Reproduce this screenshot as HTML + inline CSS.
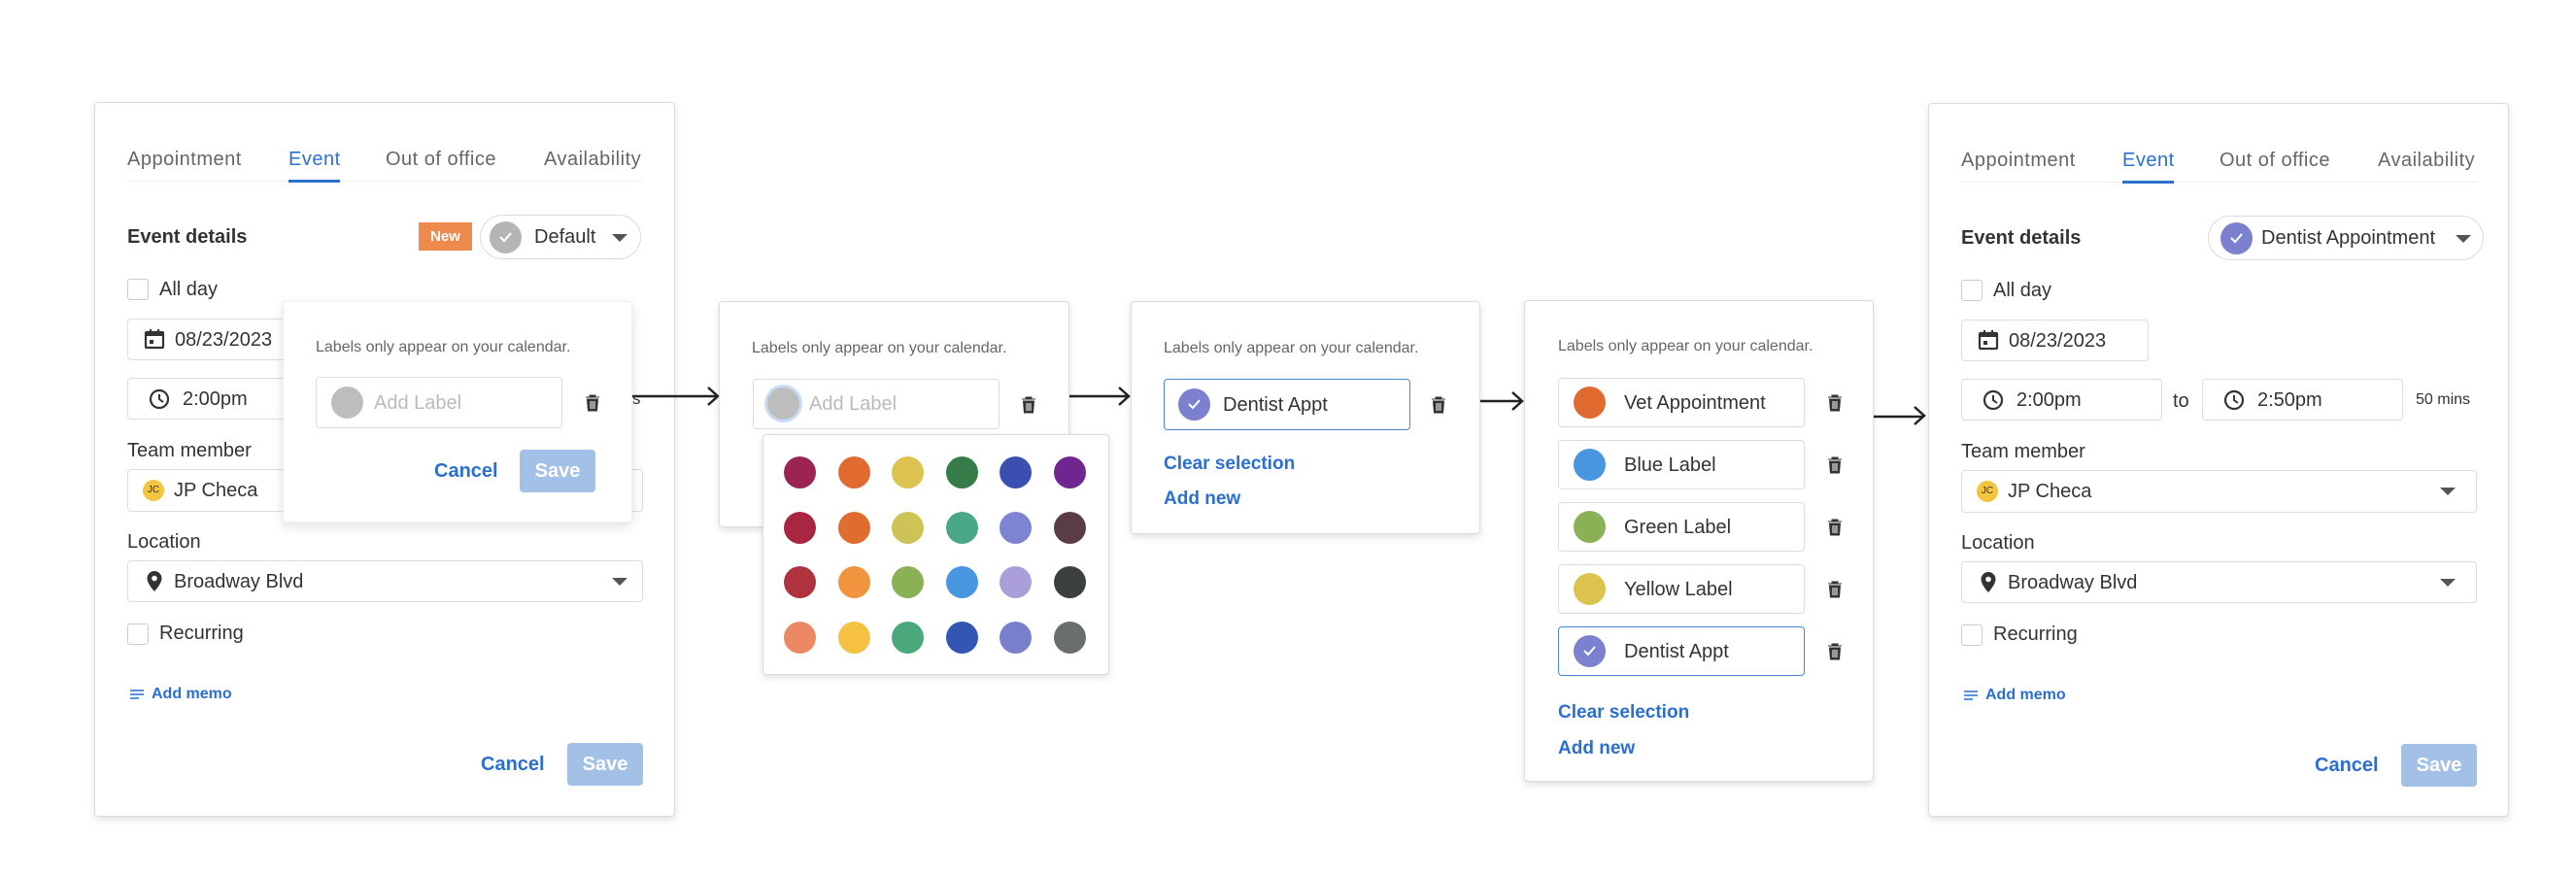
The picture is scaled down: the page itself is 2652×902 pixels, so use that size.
<!DOCTYPE html>
<html><head><meta charset="utf-8"><style>
*{box-sizing:border-box;margin:0;padding:0}
body{width:2652px;height:902px;background:#fff;position:relative;overflow:hidden;font-family:"Liberation Sans",Arial,sans-serif;color:#333}
.a{position:absolute}
.panel{position:absolute;background:#fff;border:1px solid #dcdcdc;border-radius:4px;box-shadow:0 3px 8px rgba(0,0,0,.12)}
.tab{position:absolute;top:46px;font-size:20px;color:#666;line-height:24px;white-space:nowrap;letter-spacing:0.5px}
.lbl{position:absolute;font-size:20px;line-height:24px;color:#333;white-space:nowrap}
.box{position:absolute;border:1.5px solid #dcdcdc;border-radius:4px;background:#fff}
.cb{position:absolute;width:22px;height:22px;border:1.5px solid #ccc;border-radius:3px}
.blue{color:#2b6fcf}
.save{position:absolute;background:#a3c1e6;color:#fff;font-weight:bold;font-size:20px;border-radius:4px;text-align:center}
.dot{position:absolute;width:33px;height:33px;border-radius:50%}
.hint{position:absolute;font-size:16px;color:#666;white-space:nowrap;line-height:20px}
.caret{position:absolute;width:0;height:0;border-left:8px solid transparent;border-right:8px solid transparent;border-top:8px solid #555}
svg{position:absolute}
</style></head><body>

<!-- PANEL 1 -->
<div class="panel" style="left:97px;top:105px;width:598px;height:736px">
  <div class="tab" style="left:33px">Appointment</div>
  <div class="tab blue" style="left:199px">Event</div>
  <div class="tab" style="left:299px">Out of office</div>
  <div class="tab" style="left:462px">Availability</div>
  <div class="a" style="left:33px;top:80px;width:531px;height:1px;background:#eee"></div>
  <div class="a" style="left:199px;top:79px;width:53px;height:3px;background:#2b6fcf"></div>
  <div class="lbl" style="left:33px;top:126px;font-weight:bold">Event details</div>
  <div class="a" style="left:333px;top:123px;width:55px;height:29px;background:#ef8a4f;color:#fff;font-size:15px;font-weight:bold;text-align:center;line-height:29px">New</div>
  <div class="box" style="left:396px;top:115px;width:166px;height:46px;border-radius:23px"></div>
  <div class="dot" style="left:406px;top:122px;background:#b5b5b5"></div>
  <svg style="left:414px;top:131px" width="17" height="14" viewBox="0 0 17 14"><path d="M3 7l4 4 7-8" stroke="#fff" stroke-width="2" fill="none"/></svg>
  <div class="lbl" style="left:452px;top:126px">Default</div>
  <div class="caret" style="left:532px;top:135px"></div>
  <div class="cb" style="left:33px;top:181px"></div>
  <div class="lbl" style="left:66px;top:180px">All day</div>
  <div class="box" style="left:33px;top:222px;width:193px;height:43px"></div>
  <svg style="left:50px;top:232px" width="22" height="22" viewBox="0 0 22 22"><rect x="2" y="4" width="18" height="16" rx="1" fill="none" stroke="#333" stroke-width="2.2"/><rect x="2" y="4" width="18" height="4" fill="#333"/><rect x="6" y="1" width="2" height="5" fill="#333"/><rect x="14" y="1" width="2" height="5" fill="#333"/><rect x="6" y="12" width="4" height="4" fill="#333"/></svg>
  <div class="lbl" style="left:82px;top:232px">08/23/2023</div>
  <div class="box" style="left:33px;top:283px;width:207px;height:43px"></div>
  <svg style="left:55px;top:294px" width="22" height="22" viewBox="0 0 22 22"><circle cx="11" cy="11" r="9" fill="none" stroke="#333" stroke-width="2.2"/><path d="M11 6v5l4 3" stroke="#333" stroke-width="2" fill="none"/></svg>
  <div class="lbl" style="left:90px;top:293px">2:00pm</div>
  <div class="hint" style="left:553px;top:295px;color:#333;font-size:17px">s</div>
  <div class="lbl" style="left:33px;top:346px">Team member</div>
  <div class="box" style="left:33px;top:377px;width:531px;height:44px"></div>
  <div class="a" style="left:49px;top:388px;width:22px;height:22px;border-radius:50%;background:#f4c53e;font-size:10px;text-align:center;line-height:22px;color:#333">JC</div>
  <div class="lbl" style="left:81px;top:387px">JP Checa</div>
  <div class="lbl" style="left:33px;top:440px">Location</div>
  <div class="box" style="left:33px;top:471px;width:531px;height:43px"></div>
  <svg style="left:52px;top:481px" width="18" height="24" viewBox="0 0 18 24"><path d="M9 1a7.5 7.5 0 0 0-7.5 7.5C1.5 14 9 22 9 22s7.5-8 7.5-13.5A7.5 7.5 0 0 0 9 1z" fill="#333"/><circle cx="9" cy="8.5" r="2.8" fill="#fff"/></svg>
  <div class="lbl" style="left:81px;top:481px">Broadway Blvd</div>
  <div class="caret" style="left:532px;top:489px"></div>
  <div class="cb" style="left:33px;top:536px"></div>
  <div class="lbl" style="left:66px;top:534px">Recurring</div>
  <svg style="left:36px;top:603px" width="14" height="12" viewBox="0 0 14 12"><path d="M0 2h14M0 6h14M0 10h9" stroke="#2b6fcf" stroke-width="1.6"/></svg>
  <div class="lbl blue" style="left:58px;top:599px;font-size:16px;font-weight:bold;line-height:20px">Add memo</div>
  <div class="lbl blue" style="left:397px;top:669px;font-weight:bold">Cancel</div>
  <div class="save" style="left:486px;top:659px;width:78px;height:44px;line-height:44px">Save</div>
</div>
<!-- popup over panel 1 -->
<div class="panel" style="left:291px;top:310px;width:360px;height:228px;border-color:#eee;box-shadow:0 4px 12px rgba(0,0,0,.12)">
  <div class="hint" style="left:33px;top:37px">Labels only appear on your calendar.</div>
  <div class="box" style="left:33px;top:77px;width:254px;height:53px"></div>
  <div class="dot" style="left:49px;top:87px;background:#bdbdbd"></div>
  <div class="lbl" style="left:93px;top:92px;color:#bbb">Add Label</div>
  <svg style="left:310px;top:95px" width="16" height="18" viewBox="0 0 16 18"><path d="M1 3h14M5 3V1h6v2M2.5 5h11l-1 12h-9z" fill="#333" stroke="#333" stroke-width="1"/><path d="M6 7v8M8 7v8M10 7v8" stroke="#fff" stroke-width="1"/></svg>
  <div class="lbl blue" style="left:155px;top:162px;font-weight:bold">Cancel</div>
  <div class="save" style="left:243px;top:152px;width:78px;height:44px;line-height:44px">Save</div>
</div>

<!-- arrows -->
<svg style="left:651px;top:396px" width="92" height="24" viewBox="0 0 92 24"><path d="M0 12h88M78 3l10 9-10 9" stroke="#222" stroke-width="2.5" fill="none"/></svg>
<svg style="left:1101px;top:396px" width="65" height="24" viewBox="0 0 65 24"><path d="M0 12h61M51 3l10 9-10 9" stroke="#222" stroke-width="2.5" fill="none"/></svg>
<svg style="left:1524px;top:401px" width="47" height="24" viewBox="0 0 47 24"><path d="M0 12h43M33 3l10 9-10 9" stroke="#222" stroke-width="2.5" fill="none"/></svg>
<svg style="left:1929px;top:416px" width="56" height="24" viewBox="0 0 56 24"><path d="M0 13h52M42 3l10 9-10 9" stroke="#222" stroke-width="2.5" fill="none"/></svg>

<!-- PANEL 2 -->
<div class="panel" style="left:740px;top:310px;width:361px;height:233px">
  <div class="hint" style="left:33px;top:38px">Labels only appear on your calendar.</div>
  <div class="box" style="left:34px;top:79px;width:254px;height:52px"></div>
  <div class="dot" style="left:49px;top:88px;background:#bdbdbd;box-shadow:0 0 0 3px #c7dbf3"></div>
  <div class="lbl" style="left:92px;top:93px;color:#bbb">Add Label</div>
  <svg style="left:310px;top:97px" width="16" height="18" viewBox="0 0 16 18"><path d="M1 3h14M5 3V1h6v2M2.5 5h11l-1 12h-9z" fill="#333" stroke="#333" stroke-width="1"/><path d="M6 7v8M8 7v8M10 7v8" stroke="#fff" stroke-width="1"/></svg>
</div>
<div class="panel" style="left:785px;top:447px;width:357px;height:248px">
  <div class="dot" style="left:21px;top:22px;background:#9c2451"></div>
  <div class="dot" style="left:77px;top:22px;background:#e06a2f"></div>
  <div class="dot" style="left:132px;top:22px;background:#dcc24f"></div>
  <div class="dot" style="left:188px;top:22px;background:#357c49"></div>
  <div class="dot" style="left:243px;top:22px;background:#3a4fb0"></div>
  <div class="dot" style="left:299px;top:22px;background:#6f278f"></div>
  <div class="dot" style="left:21px;top:79px;background:#a8263f"></div>
  <div class="dot" style="left:77px;top:79px;background:#e16c30"></div>
  <div class="dot" style="left:132px;top:79px;background:#cdc357"></div>
  <div class="dot" style="left:188px;top:79px;background:#4aa886"></div>
  <div class="dot" style="left:243px;top:79px;background:#7d84d1"></div>
  <div class="dot" style="left:299px;top:79px;background:#5a3c44"></div>
  <div class="dot" style="left:21px;top:135px;background:#b1323f"></div>
  <div class="dot" style="left:77px;top:135px;background:#f0943e"></div>
  <div class="dot" style="left:132px;top:135px;background:#8ab155"></div>
  <div class="dot" style="left:188px;top:135px;background:#4896e0"></div>
  <div class="dot" style="left:243px;top:135px;background:#aa9fd8"></div>
  <div class="dot" style="left:299px;top:135px;background:#3c3f40"></div>
  <div class="dot" style="left:21px;top:192px;background:#ec8863"></div>
  <div class="dot" style="left:77px;top:192px;background:#f6c244"></div>
  <div class="dot" style="left:132px;top:192px;background:#4ba87a"></div>
  <div class="dot" style="left:188px;top:192px;background:#3456b3"></div>
  <div class="dot" style="left:243px;top:192px;background:#7880cc"></div>
  <div class="dot" style="left:299px;top:192px;background:#6b6e6e"></div>
</div>

<!-- PANEL 3 -->
<div class="panel" style="left:1164px;top:310px;width:360px;height:240px">
  <div class="hint" style="left:33px;top:38px">Labels only appear on your calendar.</div>
  <div class="box" style="left:33px;top:79px;width:254px;height:53px;border-color:#4a84d6"></div>
  <div class="dot" style="left:48px;top:89px;background:#7b80cf"></div>
  <svg style="left:56px;top:98px" width="17" height="14" viewBox="0 0 17 14"><path d="M3 7l4 4 7-8" stroke="#fff" stroke-width="2" fill="none"/></svg>
  <div class="lbl" style="left:94px;top:94px">Dentist Appt</div>
  <svg style="left:308px;top:97px" width="16" height="18" viewBox="0 0 16 18"><path d="M1 3h14M5 3V1h6v2M2.5 5h11l-1 12h-9z" fill="#333" stroke="#333" stroke-width="1"/><path d="M6 7v8M8 7v8M10 7v8" stroke="#fff" stroke-width="1"/></svg>
  <div class="lbl blue" style="left:33px;top:155px;font-weight:bold;font-size:19px">Clear selection</div>
  <div class="lbl blue" style="left:33px;top:191px;font-weight:bold;font-size:19px">Add new</div>
</div>

<!-- PANEL 4 -->
<div class="panel" style="left:1569px;top:309px;width:360px;height:496px">
  <div class="hint" style="left:34px;top:37px">Labels only appear on your calendar.</div>
  <div class="box" style="left:34px;top:79px;width:254px;height:51px"></div>
  <div class="dot" style="left:50px;top:88px;background:#e06a2f"></div>
  <div class="lbl" style="left:102px;top:93px">Vet Appointment</div>
  <div class="box" style="left:34px;top:143px;width:254px;height:51px"></div>
  <div class="dot" style="left:50px;top:152px;background:#4896e0"></div>
  <div class="lbl" style="left:102px;top:157px">Blue Label</div>
  <div class="box" style="left:34px;top:207px;width:254px;height:51px"></div>
  <div class="dot" style="left:50px;top:216px;background:#8ab155"></div>
  <div class="lbl" style="left:102px;top:221px">Green Label</div>
  <div class="box" style="left:34px;top:271px;width:254px;height:51px"></div>
  <div class="dot" style="left:50px;top:280px;background:#dcc24f"></div>
  <div class="lbl" style="left:102px;top:285px">Yellow Label</div>
  <div class="box" style="left:34px;top:335px;width:254px;height:51px;border-color:#4a84d6"></div>
  <div class="dot" style="left:50px;top:344px;background:#7b80cf"></div>
  <svg style="left:58px;top:353px" width="17" height="14" viewBox="0 0 17 14"><path d="M3 7l4 4 7-8" stroke="#fff" stroke-width="2" fill="none"/></svg>
  <div class="lbl" style="left:102px;top:349px">Dentist Appt</div>
  <svg style="left:311px;top:96px" width="16" height="18" viewBox="0 0 16 18"><path d="M1 3h14M5 3V1h6v2M2.5 5h11l-1 12h-9z" fill="#333" stroke="#333" stroke-width="1"/><path d="M6 7v8M8 7v8M10 7v8" stroke="#fff" stroke-width="1"/></svg>
  <svg style="left:311px;top:160px" width="16" height="18" viewBox="0 0 16 18"><path d="M1 3h14M5 3V1h6v2M2.5 5h11l-1 12h-9z" fill="#333" stroke="#333" stroke-width="1"/><path d="M6 7v8M8 7v8M10 7v8" stroke="#fff" stroke-width="1"/></svg>
  <svg style="left:311px;top:224px" width="16" height="18" viewBox="0 0 16 18"><path d="M1 3h14M5 3V1h6v2M2.5 5h11l-1 12h-9z" fill="#333" stroke="#333" stroke-width="1"/><path d="M6 7v8M8 7v8M10 7v8" stroke="#fff" stroke-width="1"/></svg>
  <svg style="left:311px;top:288px" width="16" height="18" viewBox="0 0 16 18"><path d="M1 3h14M5 3V1h6v2M2.5 5h11l-1 12h-9z" fill="#333" stroke="#333" stroke-width="1"/><path d="M6 7v8M8 7v8M10 7v8" stroke="#fff" stroke-width="1"/></svg>
  <svg style="left:311px;top:352px" width="16" height="18" viewBox="0 0 16 18"><path d="M1 3h14M5 3V1h6v2M2.5 5h11l-1 12h-9z" fill="#333" stroke="#333" stroke-width="1"/><path d="M6 7v8M8 7v8M10 7v8" stroke="#fff" stroke-width="1"/></svg>
  <div class="lbl blue" style="left:34px;top:412px;font-weight:bold;font-size:19px">Clear selection</div>
  <div class="lbl blue" style="left:34px;top:449px;font-weight:bold;font-size:19px">Add new</div>
</div>

<!-- PANEL 5 -->
<div class="panel" style="left:1985px;top:106px;width:598px;height:735px">
  <div class="tab" style="left:33px">Appointment</div>
  <div class="tab blue" style="left:199px">Event</div>
  <div class="tab" style="left:299px">Out of office</div>
  <div class="tab" style="left:462px">Availability</div>
  <div class="a" style="left:33px;top:80px;width:531px;height:1px;background:#eee"></div>
  <div class="a" style="left:199px;top:79px;width:53px;height:3px;background:#2b6fcf"></div>
  <div class="lbl" style="left:33px;top:126px;font-weight:bold">Event details</div>
  <div class="box" style="left:287px;top:115px;width:284px;height:46px;border-radius:23px"></div>
  <div class="dot" style="left:300px;top:122px;background:#7b80cf"></div>
  <svg style="left:308px;top:131px" width="17" height="14" viewBox="0 0 17 14"><path d="M3 7l4 4 7-8" stroke="#fff" stroke-width="2" fill="none"/></svg>
  <div class="lbl" style="left:342px;top:126px">Dentist Appointment</div>
  <div class="caret" style="left:542px;top:135px"></div>
  <div class="cb" style="left:33px;top:181px"></div>
  <div class="lbl" style="left:66px;top:180px">All day</div>
  <div class="box" style="left:33px;top:222px;width:193px;height:43px"></div>
  <svg style="left:50px;top:232px" width="22" height="22" viewBox="0 0 22 22"><rect x="2" y="4" width="18" height="16" rx="1" fill="none" stroke="#333" stroke-width="2.2"/><rect x="2" y="4" width="18" height="4" fill="#333"/><rect x="6" y="1" width="2" height="5" fill="#333"/><rect x="14" y="1" width="2" height="5" fill="#333"/><rect x="6" y="12" width="4" height="4" fill="#333"/></svg>
  <div class="lbl" style="left:82px;top:232px">08/23/2023</div>
  <div class="box" style="left:33px;top:283px;width:207px;height:43px"></div>
  <svg style="left:55px;top:294px" width="22" height="22" viewBox="0 0 22 22"><circle cx="11" cy="11" r="9" fill="none" stroke="#333" stroke-width="2.2"/><path d="M11 6v5l4 3" stroke="#333" stroke-width="2" fill="none"/></svg>
  <div class="lbl" style="left:90px;top:293px">2:00pm</div>
  <div class="lbl" style="left:251px;top:294px">to</div>
  <div class="box" style="left:281px;top:283px;width:207px;height:43px"></div>
  <svg style="left:303px;top:294px" width="22" height="22" viewBox="0 0 22 22"><circle cx="11" cy="11" r="9" fill="none" stroke="#333" stroke-width="2.2"/><path d="M11 6v5l4 3" stroke="#333" stroke-width="2" fill="none"/></svg>
  <div class="lbl" style="left:338px;top:293px">2:50pm</div>
  <div class="hint" style="left:501px;top:295px;color:#333">50 mins</div>
  <div class="lbl" style="left:33px;top:346px">Team member</div>
  <div class="box" style="left:33px;top:377px;width:531px;height:44px"></div>
  <div class="a" style="left:49px;top:388px;width:22px;height:22px;border-radius:50%;background:#f4c53e;font-size:10px;text-align:center;line-height:22px;color:#333">JC</div>
  <div class="lbl" style="left:81px;top:387px">JP Checa</div>
  <div class="caret" style="left:526px;top:395px"></div>
  <div class="lbl" style="left:33px;top:440px">Location</div>
  <div class="box" style="left:33px;top:471px;width:531px;height:43px"></div>
  <svg style="left:52px;top:481px" width="18" height="24" viewBox="0 0 18 24"><path d="M9 1a7.5 7.5 0 0 0-7.5 7.5C1.5 14 9 22 9 22s7.5-8 7.5-13.5A7.5 7.5 0 0 0 9 1z" fill="#333"/><circle cx="9" cy="8.5" r="2.8" fill="#fff"/></svg>
  <div class="lbl" style="left:81px;top:481px">Broadway Blvd</div>
  <div class="caret" style="left:526px;top:489px"></div>
  <div class="cb" style="left:33px;top:536px"></div>
  <div class="lbl" style="left:66px;top:534px">Recurring</div>
  <svg style="left:36px;top:603px" width="14" height="12" viewBox="0 0 14 12"><path d="M0 2h14M0 6h14M0 10h9" stroke="#2b6fcf" stroke-width="1.6"/></svg>
  <div class="lbl blue" style="left:58px;top:599px;font-size:16px;font-weight:bold;line-height:20px">Add memo</div>
  <div class="lbl blue" style="left:397px;top:669px;font-weight:bold">Cancel</div>
  <div class="save" style="left:486px;top:659px;width:78px;height:44px;line-height:44px">Save</div>
</div>
</body></html>
